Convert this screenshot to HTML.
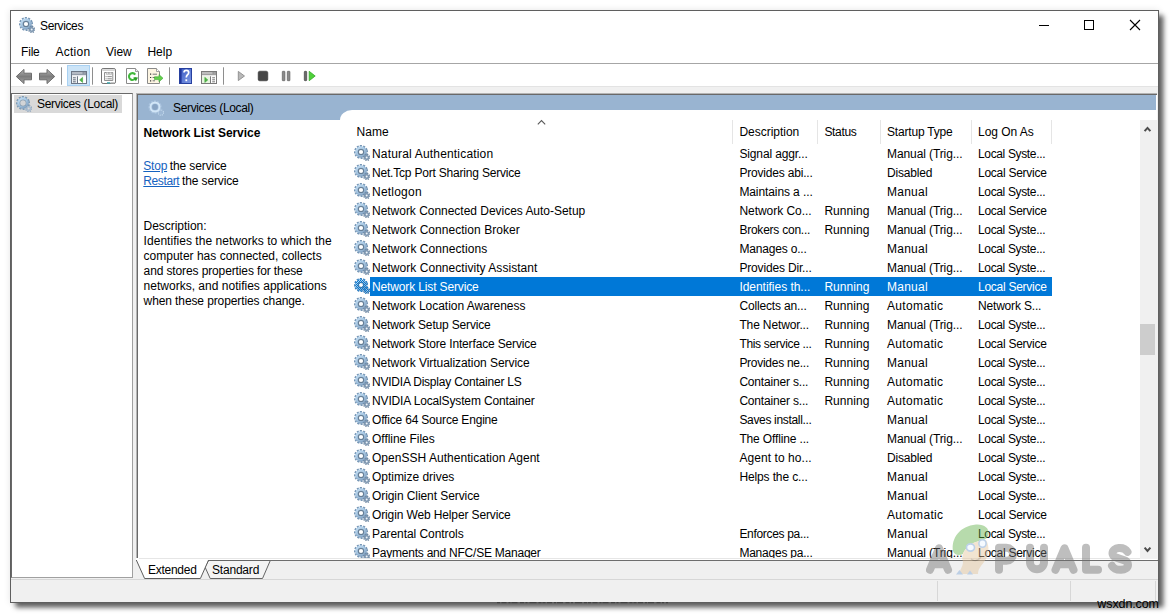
<!DOCTYPE html>
<html>
<head>
<meta charset="utf-8">
<title>Services</title>
<style>
html,body{margin:0;padding:0;}
body{width:1170px;height:614px;overflow:hidden;background:#fff;position:relative;font-family:"Liberation Sans",sans-serif;font-size:12px;color:#000;}
.a{position:absolute;}
.t{position:absolute;white-space:pre;line-height:16px;font-size:12px;}
.g{position:absolute;color:#fff;}
#win{position:absolute;left:10px;top:10px;width:1147px;height:591px;border:1px solid #5f5f5f;background:#f0f0f0;box-shadow:4.7px 4.7px 5px rgba(0,0,0,.62), 0 0 7px rgba(0,0,0,.10);}
</style>
</head>
<body>
<svg width="0" height="0" style="position:absolute">
 <defs>
  <radialGradient id="gg" cx="0.42" cy="0.38" r="0.62"><stop offset="0" stop-color="#dcedfa"/><stop offset="0.6" stop-color="#a9cbe8"/><stop offset="1" stop-color="#7797b8"/></radialGradient>
  <radialGradient id="ggs" cx="0.42" cy="0.38" r="0.62"><stop offset="0" stop-color="#9cc4e8"/><stop offset="0.55" stop-color="#6a9fd0"/><stop offset="1" stop-color="#2f6aa8"/></radialGradient>
  <pattern id="chk" width="2" height="2" patternUnits="userSpaceOnUse"><rect width="1" height="1" fill="#0078d7"/><rect x="1" y="1" width="1" height="1" fill="#0078d7"/></pattern>
  <symbol id="gear" viewBox="0 0 16 16">
   <circle cx="7" cy="7" r="6.2" fill="none" stroke="#7696b5" stroke-width="1.7" stroke-dasharray="2.0 1.246" transform="rotate(-17 7 7)"/>
   <circle cx="7" cy="7" r="5.75" fill="url(#gg)"/>
   <circle cx="7" cy="7" r="3.6" fill="#8fa9c2"/>
   <circle cx="7" cy="7" r="3.1" fill="#647d95"/>
   <circle cx="7" cy="7" r="2.1" fill="currentColor"/>
   <circle cx="12.7" cy="12.5" r="2.9" fill="none" stroke="#6f88a2" stroke-width="1.5" stroke-dasharray="1.2 1.078"/>
   <circle cx="12.7" cy="12.5" r="2.5" fill="#7d96b0"/>
   <circle cx="12.7" cy="12.5" r="1.0" fill="#eef4fa"/>
  </symbol>
  <symbol id="geart" viewBox="0 0 16 16">
   <circle cx="7" cy="7" r="6.2" fill="none" stroke="#7d9cb6" stroke-width="1.7" stroke-dasharray="2.0 1.246" transform="rotate(-17 7 7)"/>
   <circle cx="7" cy="7" r="5.75" fill="url(#gg)"/>
   <circle cx="7" cy="7" r="3.5" fill="#8299ad"/>
   <circle cx="7" cy="7" r="2.75" fill="#d2d4d6"/>
   <circle cx="12.7" cy="12.5" r="2.9" fill="none" stroke="#8fa6bd" stroke-width="1.5" stroke-dasharray="1.2 1.078"/>
   <circle cx="12.7" cy="12.5" r="2.5" fill="#a9bccf"/>
   <circle cx="12.7" cy="12.5" r="1.0" fill="#d9d9d9"/>
  </symbol>
  <symbol id="gears" viewBox="0 0 16 16">
   <use href="#gear"/>
   <circle cx="7" cy="7" r="6.2" fill="none" stroke="url(#chk)" stroke-width="1.7" stroke-dasharray="2.0 1.246" transform="rotate(-17 7 7)"/>
   <path d="M7 1.25A5.75 5.75 0 1 0 7 12.75A5.75 5.75 0 1 0 7 1.25ZM7 5.05A1.95 1.95 0 1 1 7 8.95A1.95 1.95 0 1 1 7 5.05Z" fill="url(#chk)" fill-rule="evenodd"/>
   <circle cx="12.7" cy="12.5" r="2.9" fill="none" stroke="url(#chk)" stroke-width="1.5" stroke-dasharray="1.2 1.078"/>
   <circle cx="12.7" cy="12.5" r="2.5" fill="url(#chk)"/>
  </symbol>
  <symbol id="gearh" viewBox="0 0 16 16">
   <circle cx="7" cy="7" r="6.0" fill="none" stroke="#a9c3df" stroke-width="1.4" stroke-dasharray="2.0 1.14" transform="rotate(-17 7 7)"/>
   <circle cx="7" cy="7" r="5.5" fill="#d2e6f7"/>
   <circle cx="7" cy="7" r="3.6" fill="#a9c4e0"/>
   <circle cx="7" cy="7" r="2.9" fill="#88a4c3"/>
   <circle cx="12.9" cy="12.6" r="2.6" fill="none" stroke="#c3d8ec" stroke-width="1.2" stroke-dasharray="1.1 0.94"/>
   <circle cx="12.9" cy="12.6" r="1.6" fill="#9fb9d6"/>
  </symbol>
 </defs>
</svg>

<div id="win"></div>

<!-- title bar + menu (white) -->
<div class="a" style="left:11px;top:11px;width:1147px;height:52px;background:#fff"></div>
<div class="a" style="left:11px;top:63px;width:1147px;height:1px;background:#a6a6a6"></div>
<!-- toolbar -->
<div class="a" style="left:11px;top:64px;width:1147px;height:22px;background:#fff"></div>
<div class="a" style="left:11px;top:86px;width:1147px;height:1px;background:#e3e3e3"></div>

<!-- title icon -->
<svg class="g" style="left:19px;top:17px" width="16" height="16"><use href="#gear"/></svg>

<!-- caption buttons -->
<svg class="a" style="left:1030px;top:11px" width="128" height="30" viewBox="0 0 128 30">
 <path d="M9 14.5H19" stroke="#000" stroke-width="1" fill="none"/>
 <rect x="54.5" y="9.5" width="9" height="9" stroke="#000" stroke-width="1" fill="none"/>
 <path d="M100 9L110 19M110 9L100 19" stroke="#000" stroke-width="1.1" fill="none"/>
</svg>

<!-- toolbar icons -->
<svg class="a" style="left:0;top:60px" width="340" height="30" viewBox="0 60 340 30">
 <defs>
  <linearGradient id="arw" x1="0" y1="0" x2="0" y2="1"><stop offset="0" stop-color="#b4b4b4"/><stop offset="0.5" stop-color="#7c7c7c"/><stop offset="1" stop-color="#a4a4a4"/></linearGradient>
  <linearGradient id="hlp" x1="0" y1="0" x2="1" y2="1"><stop offset="0" stop-color="#3a59c2"/><stop offset="1" stop-color="#7f9be6"/></linearGradient>
 </defs>
 <!-- back / forward -->
 <path d="M16.3 76.5L24 69.4V73.2H31.5V79.8H24V83.6Z" fill="url(#arw)" stroke="#6c6c6c" stroke-width="1" stroke-linejoin="round"/>
 <path d="M54.7 76.5L47 69.4V73.2H39.5V79.8H47V83.6Z" fill="url(#arw)" stroke="#6c6c6c" stroke-width="1" stroke-linejoin="round"/>
 <!-- separators -->
 <path d="M61.5 67.3V84.7M92.5 67.3V84.7M169.5 67.3V84.7M223.5 67.3V84.7" stroke="#8e8e8e" stroke-width="1"/>
 <!-- selected button -->
 <rect x="67.5" y="65.5" width="22" height="20" fill="#cce4f7" stroke="#a9d1f2" stroke-width="1"/>
 <!-- show/hide tree icon -->
 <rect x="71.5" y="71.5" width="15" height="12" fill="#fff" stroke="#6c7686"/>
 <rect x="72" y="72" width="14" height="2.2" fill="#b4bac4"/>
 <rect x="82.6" y="72.4" width="1.1" height="1.2" fill="#5a6270"/><rect x="84.5" y="72.4" width="1.1" height="1.2" fill="#5a6270"/>
 <rect x="72" y="74.2" width="14" height="0.9" fill="#7d8696"/>
 <rect x="72" y="75.1" width="14" height="1.2" fill="#e4e6ea"/>
 <rect x="72" y="76.3" width="5" height="6.7" fill="#eef0f3"/>
 <path d="M77.5 76.3V83.5" stroke="#6c7686" stroke-width="1"/>
 <path d="M73 77.8H75.8M73 79.8H75.8M73 81.8H75.8" stroke="#555e6c" stroke-width="0.9"/>
 <path d="M82.6 77.3L79.6 79.9L82.6 82.5Z" fill="#4db645" stroke="#3b9a35" stroke-width="0.5"/>
 <!-- properties icon -->
 <rect x="101.5" y="68.5" width="14" height="15" rx="1.6" fill="#fff" stroke="#757575"/>
 <rect x="102.3" y="69.3" width="12.4" height="1.6" fill="#d0d0d0"/>
 <path d="M104.5 80.5V72.5H112.8V80.5Z" fill="#fafafa" stroke="#858585" stroke-width="0.9"/><path d="M106.3 72.5V74.3H108.6V72.5M109.2 72.5V74.3H111.6V72.5" fill="#e8e8e8" stroke="#9a9a9a" stroke-width="0.6"/>
 <path d="M105.6 76.6H106.6M107.4 76.6H111.8M105.6 78.8H106.6M107.4 78.8H111.8" stroke="#808080" stroke-width="0.9"/>
 <rect x="107" y="82.2" width="3.2" height="1.3" fill="#3aa8b0"/>
 <rect x="110.5" y="82.2" width="3.5" height="1.3" fill="#b8b8b8"/>
 <!-- refresh icon -->
 <path d="M126.5 68.5H135.5L138.5 71.5V83.5H126.5Z" fill="#fff" stroke="#8a8a8a"/>
 <path d="M135.5 68.5V71.5H138.5" fill="#f0f0f0" stroke="#8a8a8a" stroke-width="0.8"/>
 <path d="M135.7 77.3A3.4 3.4 0 1 1 135.2 74.6" fill="none" stroke="#42b83c" stroke-width="2.1"/>
 <path d="M133.2 77.6H138L135.9 81.2Z" fill="#2f9e2c"/>
 <!-- export icon -->
 <path d="M147.5 68.5H156.5L159.5 71.5V83.5H147.5Z" fill="#fdf5e2" stroke="#8a8a8a"/>
 <path d="M156.5 68.5V71.5H159.5" fill="#fff" stroke="#8a8a8a" stroke-width="0.8"/>
 <path d="M150 74.2H151.2M150 77.5H151.2M150 80.8H151.2" stroke="#333" stroke-width="1.2"/>
 <path d="M152.6 74.2H157M152.6 77.5H155M152.6 80.8H155" stroke="#777" stroke-width="1"/>
 <path d="M154.5 76.8H159V74.6L163 78.2L159 81.8V79.6H154.5Z" fill="#63cf4a" stroke="#3aa535" stroke-width="0.6"/>
 <!-- help icon -->
 <rect x="179" y="68" width="13" height="16" fill="url(#hlp)"/>
 <rect x="179" y="68" width="2.6" height="16" fill="#20359a"/>
 <rect x="179.5" y="68.5" width="12" height="15" fill="none" stroke="#27409f" stroke-width="1"/>
 <path d="M184 72.6Q184 70.4 186.3 70.4Q188.7 70.4 188.7 72.6Q188.7 74 187.3 75Q186.3 75.9 186.3 77.6" fill="none" stroke="#fff" stroke-width="1.7"/>
 <rect x="185.4" y="79.3" width="1.8" height="1.9" fill="#fff"/>
 <!-- console icon -->
 <rect x="201.5" y="71.5" width="15" height="12" fill="#fff" stroke="#7a7a7a"/>
 <rect x="202" y="72" width="14" height="2.2" fill="#bdbdbd"/>
 <rect x="212.6" y="72.4" width="1.1" height="1.2" fill="#666"/><rect x="214.5" y="72.4" width="1.1" height="1.2" fill="#666"/>
 <rect x="202" y="74.2" width="14" height="0.9" fill="#8a8a8a"/>
 <rect x="202" y="75.1" width="14" height="1.2" fill="#e6e6e6"/>
 <rect x="202" y="76.3" width="8" height="6.7" fill="#e7f5e0"/>
 <path d="M210.5 76.3V83.5" stroke="#7a7a7a" stroke-width="1"/>
 <path d="M212.2 77.8H215M212.2 79.8H215M212.2 81.8H215" stroke="#666" stroke-width="0.9"/>
 <path d="M204.8 77.3L207.8 79.9L204.8 82.5Z" fill="#4db645" stroke="#3b9a35" stroke-width="0.5"/>
 <!-- play (disabled) -->
 <path d="M238.3 71.4L244.5 76L238.3 80.6Z" fill="#b9b9b9" stroke="#8c8c8c" stroke-width="0.9" stroke-linejoin="round"/>
 <!-- stop -->
 <rect x="258.2" y="71.2" width="9.6" height="9.6" rx="1.6" fill="#454545" stroke="#333" stroke-width="0.6"/>
 <!-- pause -->
 <rect x="282.3" y="71.3" width="2.6" height="9.4" rx="0.5" fill="#8a8a8a" stroke="#5e5e5e" stroke-width="0.7"/>
 <rect x="287.3" y="71.3" width="2.6" height="9.4" rx="0.5" fill="#8a8a8a" stroke="#5e5e5e" stroke-width="0.7"/>
 <!-- restart -->
 <rect x="304.3" y="71.3" width="2.4" height="9.4" rx="0.7" fill="#6a6a6a" stroke="#444" stroke-width="0.7"/>
 <path d="M309.2 71.3L315.2 76L309.2 80.7Z" fill="#4fd13a" stroke="#36a82c" stroke-width="0.8" stroke-linejoin="round"/>
</svg>


<!-- left tree panel -->
<div class="a" style="left:11px;top:93px;width:122px;height:485px;background:#fff;border-top:1px solid #696969;border-left:1px solid #696969;border-right:1px solid #a0a0a0;border-bottom:1px solid #a0a0a0;box-sizing:border-box"></div>
<div class="a" style="left:14px;top:95px;width:108px;height:17.6px;background:#d9d9d9"></div>
<svg class="g" style="left:16px;top:96px" width="16" height="16"><use href="#geart"/></svg>

<!-- right panel -->
<div class="a" style="left:136px;top:93px;width:1021px;height:467px;background:#fff;border-top:1px solid #b4b4b4;border-left:1px solid #b4b4b4;box-sizing:border-box"></div>
<div class="a" style="left:137px;top:94px;width:1020px;height:464px;border-top:1px solid #696969;border-left:1px solid #696969;box-sizing:border-box"></div>
<div class="a" style="left:136px;top:558px;width:2px;height:2px;background:#fff"></div>
<div class="a" style="left:139px;top:558px;width:1018px;height:1px;background:#e6e6e6"></div>
<div class="a" style="left:208px;top:560px;width:950px;height:1px;background:#6e6e6e"></div>
<!-- blue header -->
<div class="a" style="left:138px;top:95px;width:1018px;height:25px;background:#99b4d1"></div>
<div class="a" style="left:340px;top:110px;width:817px;height:12px;background:#fff;border-top-left-radius:12px 10px"></div>
<svg class="g" style="left:148px;top:100px" width="16" height="16"><use href="#gearh"/></svg>

<!-- column separators -->
<div class="a" style="left:732px;top:120px;width:1px;height:24px;background:#e5e5e5"></div>
<div class="a" style="left:817px;top:120px;width:1px;height:24px;background:#e5e5e5"></div>
<div class="a" style="left:880px;top:120px;width:1px;height:24px;background:#e5e5e5"></div>
<div class="a" style="left:971px;top:120px;width:1px;height:24px;background:#e5e5e5"></div>
<div class="a" style="left:1051px;top:120px;width:1px;height:24px;background:#e5e5e5"></div>
<!-- sort arrow -->
<svg class="a" style="left:536px;top:118px" width="11" height="7" viewBox="0 0 11 7"><path d="M1.8 6.3L5.5 2.5L9.2 6.3" stroke="#5a5a5a" stroke-width="1.1" fill="none"/></svg>

<!-- selection -->
<div class="a" style="left:370px;top:277px;width:682px;height:19px;background:#0078d7"></div>

<!-- scrollbar -->
<div class="a" style="left:1140px;top:120px;width:16.5px;height:439px;background:#f0f0f0"></div>
<div class="a" style="left:1140px;top:324px;width:15px;height:31px;background:#cdcdcd"></div>
<svg class="a" style="left:1140px;top:120px" width="16" height="17" viewBox="0 0 16 17"><path d="M4.6 11.2L7.5 7.9L10.4 11.2" stroke="#4c4c4c" stroke-width="2" fill="none"/></svg>
<svg class="a" style="left:1140px;top:542px" width="16" height="17" viewBox="0 0 16 17"><path d="M4.6 5.6L7.5 8.9L10.4 5.6" stroke="#4c4c4c" stroke-width="2" fill="none"/></svg>

<!-- rows (clipped at panel bottom) -->
<div class="a" style="left:0;top:0;width:1170px;height:558px;overflow:hidden">
<svg class="g" style="left:354px;top:145px" width="16" height="16"><use href="#gear"/></svg>
<svg class="g" style="left:354px;top:164px" width="16" height="16"><use href="#gear"/></svg>
<svg class="g" style="left:354px;top:183px" width="16" height="16"><use href="#gear"/></svg>
<svg class="g" style="left:354px;top:202px" width="16" height="16"><use href="#gear"/></svg>
<svg class="g" style="left:354px;top:221px" width="16" height="16"><use href="#gear"/></svg>
<svg class="g" style="left:354px;top:240px" width="16" height="16"><use href="#gear"/></svg>
<svg class="g" style="left:354px;top:259px" width="16" height="16"><use href="#gear"/></svg>
<svg class="g" style="left:354px;top:278px" width="16" height="16"><use href="#gears"/></svg>
<svg class="g" style="left:354px;top:297px" width="16" height="16"><use href="#gear"/></svg>
<svg class="g" style="left:354px;top:316px" width="16" height="16"><use href="#gear"/></svg>
<svg class="g" style="left:354px;top:335px" width="16" height="16"><use href="#gear"/></svg>
<svg class="g" style="left:354px;top:354px" width="16" height="16"><use href="#gear"/></svg>
<svg class="g" style="left:354px;top:373px" width="16" height="16"><use href="#gear"/></svg>
<svg class="g" style="left:354px;top:392px" width="16" height="16"><use href="#gear"/></svg>
<svg class="g" style="left:354px;top:411px" width="16" height="16"><use href="#gear"/></svg>
<svg class="g" style="left:354px;top:430px" width="16" height="16"><use href="#gear"/></svg>
<svg class="g" style="left:354px;top:449px" width="16" height="16"><use href="#gear"/></svg>
<svg class="g" style="left:354px;top:468px" width="16" height="16"><use href="#gear"/></svg>
<svg class="g" style="left:354px;top:487px" width="16" height="16"><use href="#gear"/></svg>
<svg class="g" style="left:354px;top:506px" width="16" height="16"><use href="#gear"/></svg>
<svg class="g" style="left:354px;top:525px" width="16" height="16"><use href="#gear"/></svg>
<svg class="g" style="left:354px;top:544px" width="16" height="16"><use href="#gear"/></svg>
<span class="t" style="left:372.0px;top:146.34px;letter-spacing:0.176px;">Natural Authentication</span>
<span class="t" style="left:739.4px;top:146.34px;letter-spacing:-0.131px;">Signal aggr...</span>
<span class="t" style="left:887.0px;top:146.34px;letter-spacing:-0.098px;">Manual (Trig...</span>
<span class="t" style="left:978.0px;top:146.34px;letter-spacing:-0.352px;">Local Syste...</span>
<span class="t" style="left:372.0px;top:165.34px;letter-spacing:-0.196px;">Net.Tcp Port Sharing Service</span>
<span class="t" style="left:739.4px;top:165.34px;letter-spacing:-0.189px;">Provides abi...</span>
<span class="t" style="left:887.0px;top:165.34px;letter-spacing:-0.174px;">Disabled</span>
<span class="t" style="left:978.0px;top:165.34px;letter-spacing:-0.268px;">Local Service</span>
<span class="t" style="left:372.0px;top:184.34px;letter-spacing:0.220px;">Netlogon</span>
<span class="t" style="left:739.4px;top:184.34px;letter-spacing:-0.097px;">Maintains a ...</span>
<span class="t" style="left:887.0px;top:184.34px;letter-spacing:0.244px;">Manual</span>
<span class="t" style="left:978.0px;top:184.34px;letter-spacing:-0.352px;">Local Syste...</span>
<span class="t" style="left:372.0px;top:203.34px;letter-spacing:-0.026px;">Network Connected Devices Auto-Setup</span>
<span class="t" style="left:739.4px;top:203.34px;letter-spacing:-0.031px;">Network Co...</span>
<span class="t" style="left:824.4px;top:203.34px;letter-spacing:0.046px;">Running</span>
<span class="t" style="left:887.0px;top:203.34px;letter-spacing:-0.098px;">Manual (Trig...</span>
<span class="t" style="left:978.0px;top:203.34px;letter-spacing:-0.268px;">Local Service</span>
<span class="t" style="left:372.0px;top:222.34px;letter-spacing:0.039px;">Network Connection Broker</span>
<span class="t" style="left:739.4px;top:222.34px;letter-spacing:-0.232px;">Brokers con...</span>
<span class="t" style="left:824.4px;top:222.34px;letter-spacing:0.046px;">Running</span>
<span class="t" style="left:887.0px;top:222.34px;letter-spacing:-0.098px;">Manual (Trig...</span>
<span class="t" style="left:978.0px;top:222.34px;letter-spacing:-0.352px;">Local Syste...</span>
<span class="t" style="left:372.0px;top:241.34px;letter-spacing:0.061px;">Network Connections</span>
<span class="t" style="left:739.4px;top:241.34px;letter-spacing:-0.180px;">Manages o...</span>
<span class="t" style="left:887.0px;top:241.34px;letter-spacing:0.244px;">Manual</span>
<span class="t" style="left:978.0px;top:241.34px;letter-spacing:-0.352px;">Local Syste...</span>
<span class="t" style="left:372.0px;top:260.34px;letter-spacing:0.045px;">Network Connectivity Assistant</span>
<span class="t" style="left:739.4px;top:260.34px;letter-spacing:-0.166px;">Provides Dir...</span>
<span class="t" style="left:887.0px;top:260.34px;letter-spacing:-0.098px;">Manual (Trig...</span>
<span class="t" style="left:978.0px;top:260.34px;letter-spacing:-0.352px;">Local Syste...</span>
<span class="t" style="left:372.0px;top:279.34px;letter-spacing:-0.137px;color:#fff;">Network List Service</span>
<span class="t" style="left:739.4px;top:279.34px;letter-spacing:-0.031px;color:#fff;">Identifies th...</span>
<span class="t" style="left:824.4px;top:279.34px;letter-spacing:0.046px;color:#fff;">Running</span>
<span class="t" style="left:887.0px;top:279.34px;letter-spacing:0.244px;color:#fff;">Manual</span>
<span class="t" style="left:978.0px;top:279.34px;letter-spacing:-0.268px;color:#fff;">Local Service</span>
<span class="t" style="left:372.0px;top:298.34px;letter-spacing:-0.044px;">Network Location Awareness</span>
<span class="t" style="left:739.4px;top:298.34px;letter-spacing:-0.154px;">Collects an...</span>
<span class="t" style="left:824.4px;top:298.34px;letter-spacing:0.046px;">Running</span>
<span class="t" style="left:887.0px;top:298.34px;letter-spacing:0.346px;">Automatic</span>
<span class="t" style="left:978.0px;top:298.34px;letter-spacing:-0.179px;">Network S...</span>
<span class="t" style="left:372.0px;top:317.34px;letter-spacing:-0.164px;">Network Setup Service</span>
<span class="t" style="left:739.4px;top:317.34px;letter-spacing:-0.134px;">The Networ...</span>
<span class="t" style="left:824.4px;top:317.34px;letter-spacing:0.046px;">Running</span>
<span class="t" style="left:887.0px;top:317.34px;letter-spacing:-0.098px;">Manual (Trig...</span>
<span class="t" style="left:978.0px;top:317.34px;letter-spacing:-0.352px;">Local Syste...</span>
<span class="t" style="left:372.0px;top:336.34px;letter-spacing:-0.154px;">Network Store Interface Service</span>
<span class="t" style="left:739.4px;top:336.34px;letter-spacing:-0.326px;">This service ...</span>
<span class="t" style="left:824.4px;top:336.34px;letter-spacing:0.046px;">Running</span>
<span class="t" style="left:887.0px;top:336.34px;letter-spacing:0.346px;">Automatic</span>
<span class="t" style="left:978.0px;top:336.34px;letter-spacing:-0.268px;">Local Service</span>
<span class="t" style="left:372.0px;top:355.34px;letter-spacing:-0.050px;">Network Virtualization Service</span>
<span class="t" style="left:739.4px;top:355.34px;letter-spacing:-0.272px;">Provides ne...</span>
<span class="t" style="left:824.4px;top:355.34px;letter-spacing:0.046px;">Running</span>
<span class="t" style="left:887.0px;top:355.34px;letter-spacing:0.244px;">Manual</span>
<span class="t" style="left:978.0px;top:355.34px;letter-spacing:-0.352px;">Local Syste...</span>
<span class="t" style="left:372.0px;top:374.34px;letter-spacing:-0.215px;">NVIDIA Display Container LS</span>
<span class="t" style="left:739.4px;top:374.34px;letter-spacing:-0.183px;">Container s...</span>
<span class="t" style="left:824.4px;top:374.34px;letter-spacing:0.046px;">Running</span>
<span class="t" style="left:887.0px;top:374.34px;letter-spacing:0.346px;">Automatic</span>
<span class="t" style="left:978.0px;top:374.34px;letter-spacing:-0.352px;">Local Syste...</span>
<span class="t" style="left:372.0px;top:393.34px;letter-spacing:-0.147px;">NVIDIA LocalSystem Container</span>
<span class="t" style="left:739.4px;top:393.34px;letter-spacing:-0.183px;">Container s...</span>
<span class="t" style="left:824.4px;top:393.34px;letter-spacing:0.046px;">Running</span>
<span class="t" style="left:887.0px;top:393.34px;letter-spacing:0.346px;">Automatic</span>
<span class="t" style="left:978.0px;top:393.34px;letter-spacing:-0.352px;">Local Syste...</span>
<span class="t" style="left:372.0px;top:412.34px;letter-spacing:-0.186px;">Office 64 Source Engine</span>
<span class="t" style="left:739.4px;top:412.34px;letter-spacing:-0.327px;">Saves install...</span>
<span class="t" style="left:887.0px;top:412.34px;letter-spacing:0.244px;">Manual</span>
<span class="t" style="left:978.0px;top:412.34px;letter-spacing:-0.352px;">Local Syste...</span>
<span class="t" style="left:372.0px;top:431.34px;letter-spacing:-0.035px;">Offline Files</span>
<span class="t" style="left:739.4px;top:431.34px;letter-spacing:-0.146px;">The Offline ...</span>
<span class="t" style="left:887.0px;top:431.34px;letter-spacing:-0.098px;">Manual (Trig...</span>
<span class="t" style="left:978.0px;top:431.34px;letter-spacing:-0.352px;">Local Syste...</span>
<span class="t" style="left:372.0px;top:450.34px;letter-spacing:0.033px;">OpenSSH Authentication Agent</span>
<span class="t" style="left:739.4px;top:450.34px;letter-spacing:0.067px;">Agent to ho...</span>
<span class="t" style="left:887.0px;top:450.34px;letter-spacing:-0.174px;">Disabled</span>
<span class="t" style="left:978.0px;top:450.34px;letter-spacing:-0.352px;">Local Syste...</span>
<span class="t" style="left:372.0px;top:469.34px;letter-spacing:-0.027px;">Optimize drives</span>
<span class="t" style="left:739.4px;top:469.34px;letter-spacing:-0.128px;">Helps the c...</span>
<span class="t" style="left:887.0px;top:469.34px;letter-spacing:0.244px;">Manual</span>
<span class="t" style="left:978.0px;top:469.34px;letter-spacing:-0.352px;">Local Syste...</span>
<span class="t" style="left:372.0px;top:488.34px;letter-spacing:-0.082px;">Origin Client Service</span>
<span class="t" style="left:887.0px;top:488.34px;letter-spacing:0.244px;">Manual</span>
<span class="t" style="left:978.0px;top:488.34px;letter-spacing:-0.352px;">Local Syste...</span>
<span class="t" style="left:372.0px;top:507.34px;letter-spacing:-0.128px;">Origin Web Helper Service</span>
<span class="t" style="left:887.0px;top:507.34px;letter-spacing:0.346px;">Automatic</span>
<span class="t" style="left:978.0px;top:507.34px;letter-spacing:-0.268px;">Local Service</span>
<span class="t" style="left:372.0px;top:526.34px;letter-spacing:-0.062px;">Parental Controls</span>
<span class="t" style="left:739.4px;top:526.34px;letter-spacing:-0.322px;">Enforces pa...</span>
<span class="t" style="left:887.0px;top:526.34px;letter-spacing:0.244px;">Manual</span>
<span class="t" style="left:978.0px;top:526.34px;letter-spacing:-0.352px;">Local Syste...</span>
<span class="t" style="left:372.0px;top:545.34px;letter-spacing:-0.228px;">Payments and NFC/SE Manager</span>
<span class="t" style="left:739.4px;top:545.34px;letter-spacing:-0.221px;">Manages pa...</span>
<span class="t" style="left:887.0px;top:545.34px;letter-spacing:-0.098px;">Manual (Trig...</span>
<span class="t" style="left:978.0px;top:545.34px;letter-spacing:-0.268px;">Local Service</span>
</div>

<!-- tabs -->
<svg class="a" style="left:130px;top:556px" width="150" height="26" viewBox="130 556 150 26">
 <path d="M208.5 560.5H270.3L262.5 578.5H210.2L205 567Z" fill="#f4f4f4" stroke="#666" stroke-width="1"/>
 <path d="M136 559L144.6 578.5H200.4L208.4 560Z" fill="#fff" stroke="none"/>
 <path d="M136.3 560L144.6 578.5H200.4L208.6 560" fill="none" stroke="#5e5e5e" stroke-width="1"/>
</svg>
<!-- status bar -->
<div class="a" style="left:11px;top:579px;width:1147px;height:1px;background:#d7d7d7"></div>
<div class="a" style="left:937px;top:581px;width:1px;height:20px;background:#d7d7d7"></div>
<div class="a" style="left:1070px;top:581px;width:1px;height:20px;background:#d7d7d7"></div>
<div class="a" style="left:1155px;top:581px;width:1px;height:20px;background:#d7d7d7"></div>

<span class="t" style="left:40.0px;top:18.04px;letter-spacing:-0.375px;">Services</span>
<span class="t" style="left:21.0px;top:43.54px;letter-spacing:-0.184px;">File</span>
<span class="t" style="left:55.5px;top:43.54px;letter-spacing:0.244px;">Action</span>
<span class="t" style="left:106.0px;top:43.54px;letter-spacing:-0.028px;">View</span>
<span class="t" style="left:147.4px;top:43.54px;letter-spacing:0.032px;">Help</span>
<span class="t" style="left:37.0px;top:96.34px;letter-spacing:-0.312px;">Services (Local)</span>
<span class="t" style="left:173.0px;top:99.54px;letter-spacing:-0.344px;">Services (Local)</span>
<span class="t" style="left:143.4px;top:125.34px;letter-spacing:-0.060px;font-weight:700;">Network List Service</span>
<span class="t" style="left:143.3px;top:158.34px;letter-spacing:-0.225px;color:#1562c0;text-decoration:underline;">Stop</span>
<span class="t" style="left:166.5px;top:158.34px;letter-spacing:-0.101px;"> the service</span>
<span class="t" style="left:143.3px;top:173.34px;letter-spacing:-0.383px;color:#1562c0;text-decoration:underline;">Restart</span>
<span class="t" style="left:178.8px;top:173.34px;letter-spacing:-0.127px;"> the service</span>
<span class="t" style="left:143.6px;top:218.34px;letter-spacing:-0.040px;">Description:</span>
<span class="t" style="left:143.6px;top:233.34px;letter-spacing:0.037px;">Identifies the networks to which the</span>
<span class="t" style="left:143.6px;top:248.34px;">computer has connected, collects</span>
<span class="t" style="left:143.6px;top:263.34px;letter-spacing:-0.120px;">and stores properties for these</span>
<span class="t" style="left:143.6px;top:278.34px;letter-spacing:0.009px;">networks, and notifies applications</span>
<span class="t" style="left:143.6px;top:293.34px;letter-spacing:-0.106px;">when these properties change.</span>
<span class="t" style="left:356.5px;top:123.54px;letter-spacing:0.053px;">Name</span>
<span class="t" style="left:739.4px;top:123.54px;letter-spacing:-0.012px;">Description</span>
<span class="t" style="left:824.4px;top:123.54px;letter-spacing:-0.315px;">Status</span>
<span class="t" style="left:887.0px;top:123.54px;letter-spacing:-0.185px;">Startup Type</span>
<span class="t" style="left:978.0px;top:123.54px;letter-spacing:-0.041px;">Log On As</span>
<span class="t" style="left:148.0px;top:561.84px;letter-spacing:-0.269px;">Extended</span>
<span class="t" style="left:212.0px;top:561.84px;letter-spacing:-0.200px;">Standard</span>

<svg class="a" style="left:490px;top:600px" width="190" height="6" viewBox="490 600 190 6"><path d="M497 602.6H668" stroke="#2a2a2a" stroke-width="1.2" stroke-dasharray="3 1.5 5 2 2 1 6 2.5 4 1.5 2 2 7 2 3 1" opacity="0.55"/></svg>
<!-- watermark -->
<svg class="a" style="left:915px;top:515px;opacity:0.45" width="230" height="70" viewBox="915 515 230 70">
 <g transform="translate(0,0.8)" fill="none" stroke="#707070" stroke-width="8" stroke-linejoin="round" stroke-linecap="round">
  <path d="M930 569L939 547.5L948 569M934.5 563.5H943.5"/>
  <path d="M999 569V547H1006.5A6.5 6.5 0 0 1 1006.5 560H999"/>
  <path d="M1030 547V561.5A7 7 0 0 0 1044 561.5V547"/>
  <path d="M1055.5 569L1064.5 547.5L1073.5 569M1060 563.5H1069"/>
  <path d="M1086 547V569H1098"/>
  <path d="M1127.5 551C1124 545.5 1112.5 546 1112.5 552.5C1112.5 559.5 1128 556.5 1128 564C1128 570.5 1115 570.5 1112 565"/>
 </g>
 <!-- mascot -->
 <path d="M953 551C951 538 960 526 976 524.5C984 524 989.5 528 988.5 534C988 539 984 540 979 541C971 543 965 548 963 554C959 556 954 555 953 551Z" fill="#61b149"/>
 <path d="M963 554C965 548 971 543 979 541L986 540C990 546 989 556 984 562C981 566 978 569 978 574H960C959 570 963 567 963 562C962 559 962 556 963 554Z" fill="#e4c49a"/>
 <ellipse cx="970.5" cy="547.5" rx="4" ry="3.6" fill="#eaf4ff" stroke="#6d9ad0" stroke-width="1.6"/>
 <ellipse cx="982.5" cy="543.5" rx="3.6" ry="3.8" fill="#eaf4ff" stroke="#6d9ad0" stroke-width="1.6"/>
 <path d="M971 559Q976 563 981 557" fill="none" stroke="#a08868" stroke-width="1.2"/>
 <path d="M956 574.5L959.5 570L963 574.5ZM967 574.5L970 570.5L973 574.5Z" fill="#7fa8d8"/>
</svg>


<span class="t" style="left:1097.3px;top:595.87px;letter-spacing:-0.098px;font-size:12.5px;">wsxdn.com</span>
</body>
</html>
